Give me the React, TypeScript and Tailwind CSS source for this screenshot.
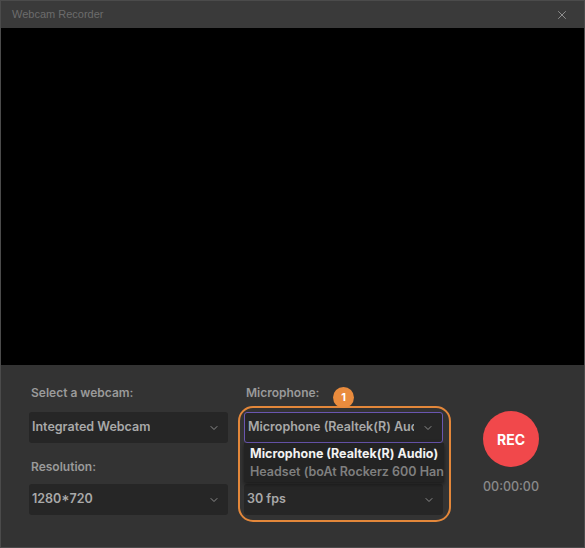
import { ChevronDown, X } from "lucide-react";

function Select({ value, className = "" }: { value: string; className?: string }) {
  return (
    <div
      className={`h-[31px] w-[199px] rounded-[3px] bg-[#262626] flex items-center justify-between pl-[3px] pr-[8px] ${className}`}
    >
      <span className="text-[12.5px] font-semibold text-[#a9a9a9] whitespace-nowrap overflow-hidden">{value}</span>
      <ChevronDown className="w-[12px] h-[12px] text-[#8c8c8c] shrink-0 ml-2" strokeWidth={2} />
    </div>
  );
}

function Label({ children }: { children: React.ReactNode }) {
  return <div className="h-[16px] leading-[16px] text-[12px] font-semibold text-[#9a9a9a] pl-[2px]">{children}</div>;
}

export default function App() {
  return (
    <div
      className="w-[585px] h-[548px] border border-[#4b4b4b] flex flex-col bg-[#333333]"
      style={{ fontFamily: "Inter, 'Noto Sans', sans-serif" }}
    >
      {/* Title bar */}
      <div className="h-[27px] bg-[#3a3a3a] flex items-center justify-between pl-[11px] pr-[15px]">
        <span className="text-[11px] text-[#6c6c6c]" style={{ fontFamily: "'Liberation Sans', Arial, sans-serif" }}>
          Webcam Recorder
        </span>
        <X className="w-[14px] h-[14px] text-[#9a9a9a]" strokeWidth={1.5} />
      </div>

      {/* Preview */}
      <div className="h-[337px] bg-black" />

      {/* Controls */}
      <div className="flex-1 flex pt-[20px] pl-[28px]">
        <div className="flex flex-col">
          <Label>Select a webcam:</Label>
          <Select value="Integrated Webcam" className="mt-[11px]" />
          <div className="mt-[16px]">
            <Label>Resolution:</Label>
          </div>
          <Select value="1280*720" className="mt-[9px]" />
        </div>

        <div className="flex flex-col ml-[16px] relative">
          <Label>Microphone:</Label>
          <div className="mt-[11px] h-[31px] w-[199px] rounded-[3px] bg-[#262626] border border-[#6a56b0] flex items-center justify-between pl-[3px] pr-[8px]">
            <span className="text-[12.5px] font-semibold text-[#a9a9a9] whitespace-nowrap overflow-hidden">
              Microphone (Realtek(R) Audio)
            </span>
            <ChevronDown className="w-[12px] h-[12px] text-[#8c8c8c] shrink-0 ml-2" strokeWidth={2} />
          </div>
          <div className="h-[41px]" />
          <Select value="30 fps" />

          {/* Open list */}
          <div className="absolute left-0 top-[58px] w-[200px] h-[39px] bg-[#232323] shadow-[0_2px_4px_rgba(0,0,0,0.5)] pl-[6px] pt-[2px] overflow-hidden">
            <div className="text-[12.5px] font-bold text-[#f2f2f2] whitespace-nowrap leading-[18px]">
              Microphone (Realtek(R) Audio)
            </div>
            <div className="text-[12.5px] font-semibold text-[#7f7f7f] whitespace-nowrap leading-[18px]">
              Headset (boAt Rockerz 600 Hands-Free)
            </div>
          </div>

          {/* Highlight */}
          <div className="absolute left-[-6px] top-[21px] w-[213px] h-[116px] rounded-[15px] border-2 border-[#e3873a] pointer-events-none" />
          <div className="absolute left-[89px] top-[2px] w-[21px] h-[21px] rounded-full bg-[#e98b3d] flex items-center justify-center text-[11px] font-bold text-white">
            1
          </div>
        </div>

        <div className="flex flex-col items-center ml-[40px] pt-[26px]">
          <div className="w-[56px] h-[56px] rounded-full bg-[#f1484b] flex items-center justify-center text-[14px] font-bold text-white">
            REC
          </div>
          <div className="mt-[11px] text-[12.5px] font-medium text-[#8a8a8a]">00:00:00</div>
        </div>
      </div>
    </div>
  );
}
